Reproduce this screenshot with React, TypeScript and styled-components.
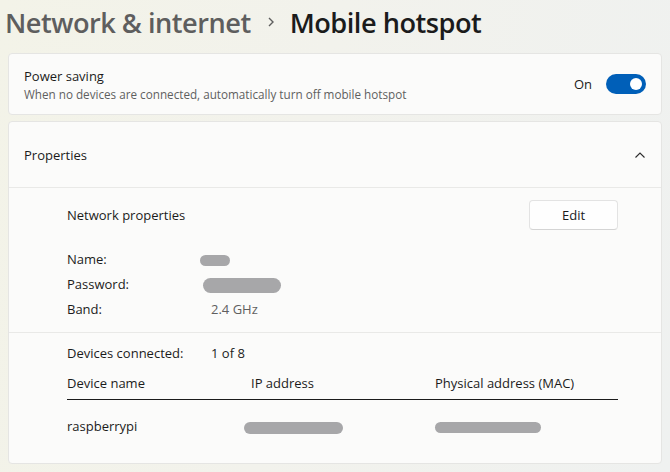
import styled, { createGlobalStyle } from 'styled-components'

const GlobalStyle = createGlobalStyle`
	html, body {
		margin: 0;
		padding: 0;
	}
	body {
		font-family: 'Open Sans', 'Noto Sans', sans-serif;
		color: #1b1b1b;
		background: linear-gradient(100deg, #f3f3e8 0%, #f2f2ec 45%, #eff1f0 100%);
		min-height: 472px;
	}
`

const Page = styled.div`
	width: 670px;
	height: 472px;
	padding: 0 8px 0 8px;
	box-sizing: border-box;
	display: flex;
	flex-direction: column;
	gap: 6px;
`

const Breadcrumb = styled.header`
	height: 44px;
	margin-bottom: 3px;
	display: flex;
	align-items: center;
	gap: 14px;
	margin-left: -3px;
	font-size: 27.2px;
	font-weight: 600;
	letter-spacing: -0.5px;
`

const Crumb = styled.span<{ $current?: boolean }>`
	color: ${p => (p.$current ? '#1b1b1b' : '#5e5e5e')};
`

const Card = styled.section`
	background: #fbfbfa;
	border: 1px solid #e5e5e3;
	border-radius: 4px;
	box-sizing: border-box;
`

const SettingRow = styled.div<{ $height: number }>`
	height: ${p => p.$height}px;
	display: flex;
	align-items: center;
	justify-content: space-between;
	padding: 0 15px 0 15px;
	box-sizing: border-box;
`

const Labels = styled.div`
	display: flex;
	flex-direction: column;
	gap: 1px;
`

const Title = styled.span`
	font-size: 13px;
	color: #1b1b1b;
`

const Subtitle = styled.span`
	font-size: 11.7px;
	color: #5f5f5f;
`

const ToggleGroup = styled.div`
	display: flex;
	align-items: center;
	gap: 14px;
	font-size: 13px;
`

const Toggle = styled.div`
	width: 40px;
	height: 20px;
	border-radius: 10px;
	background: #005fb8;
	display: flex;
	align-items: center;
	justify-content: flex-end;
	padding-right: 4px;
	box-sizing: border-box;
`

const Knob = styled.div`
	width: 12px;
	height: 12px;
	border-radius: 50%;
	background: #fff;
`

const Section = styled.div<{ $pad: string }>`
	border-top: 1px solid #e9e9e7;
	padding: ${p => p.$pad};
	display: flex;
	flex-direction: column;
`

const HeadRow = styled.div`
	display: flex;
	align-items: center;
	justify-content: space-between;
	height: 30px;
	font-size: 13px;
`

const EditButton = styled.button`
	width: 89px;
	height: 30px;
	background: #fefefe;
	border: 1px solid #e3e3e3;
	border-bottom-color: #d4d4d4;
	border-radius: 4px;
	font-family: inherit;
	font-size: 13px;
	color: #1b1b1b;
	padding: 0;
`

const PropGrid = styled.div<{ $top: number; $row: number }>`
	margin-top: ${p => p.$top}px;
	display: grid;
	grid-template-columns: 144px 1fr;
	grid-auto-rows: ${p => p.$row}px;
	align-items: center;
	font-size: 13px;
`

const Value = styled.span`
	color: #5f5f5f;
`

const Blob = styled.span<{ $w: number; $h: number; $shift?: number }>`
	display: inline-block;
	width: ${p => p.$w}px;
	height: ${p => p.$h}px;
	margin-left: ${p => p.$shift ?? 0}px;
	border-radius: ${p => p.$h / 2}px;
	background: #a7a7a9;
	vertical-align: middle;
`

const Table = styled.div`
	font-size: 13px;
`

const TableRow = styled.div<{ $head?: boolean }>`
	display: grid;
	grid-template-columns: 184px 184px 1fr;
	height: ${p => (p.$head ? '37px' : '52px')};
	padding-bottom: ${p => (p.$head ? '7px' : '0')};
	box-sizing: border-box;
	align-items: ${p => (p.$head ? 'end' : 'center')};
	border-bottom: ${p => (p.$head ? '1px solid #1b1b1b' : 'none')};
`

const Chevron = () => (
	<svg width="12" height="8" viewBox="0 0 12 8">
		<path d="M1.5 6.5 L6 2 L10.5 6.5" fill="none" stroke="#2b2b2b" strokeWidth="1.1" />
	</svg>
)

export default function App() {
	return (
		<>
			<GlobalStyle />
			<Page>
				<Breadcrumb>
					<Crumb>Network &amp; internet</Crumb>
					<svg width="11" height="12" viewBox="0 0 11 12">
						<path d="M4 2 L8 6 L4 10" fill="none" stroke="#5e5e5e" strokeWidth="1.4" />
					</svg>
					<Crumb $current>Mobile hotspot</Crumb>
				</Breadcrumb>

				<Card>
					<SettingRow $height={60}>
						<Labels>
							<Title>Power saving</Title>
							<Subtitle>When no devices are connected, automatically turn off mobile hotspot</Subtitle>
						</Labels>
						<ToggleGroup>
							<span>On</span>
							<Toggle>
								<Knob />
							</Toggle>
						</ToggleGroup>
					</SettingRow>
				</Card>

				<Card>
					<SettingRow $height={65}>
						<Title>Properties</Title>
						<Chevron />
					</SettingRow>

					<Section $pad="12px 43px 11px 58px">
						<HeadRow>
							<span>Network properties</span>
							<EditButton>Edit</EditButton>
						</HeadRow>
						<PropGrid $top={16} $row={25}>
							<span>Name:</span>
							<span><Blob $w={30} $h={11} $shift={-11} /></span>
							<span>Password:</span>
							<span><Blob $w={78} $h={15} $shift={-8} /></span>
							<span>Band:</span>
							<Value>2.4 GHz</Value>
						</PropGrid>
					</Section>

					<Section $pad="10px 43px 11px 58px">
						<PropGrid $top={0} $row={20}>
							<span>Devices connected:</span>
							<span>1 of 8</span>
						</PropGrid>
						<Table>
							<TableRow $head>
								<span>Device name</span>
								<span>IP address</span>
								<span>Physical address (MAC)</span>
							</TableRow>
							<TableRow>
								<span>raspberrypi</span>
								<span><Blob $w={99} $h={12} $shift={-7} /></span>
								<span><Blob $w={106} $h={11} /></span>
							</TableRow>
						</Table>
					</Section>
				</Card>
			</Page>
		</>
	)
}
